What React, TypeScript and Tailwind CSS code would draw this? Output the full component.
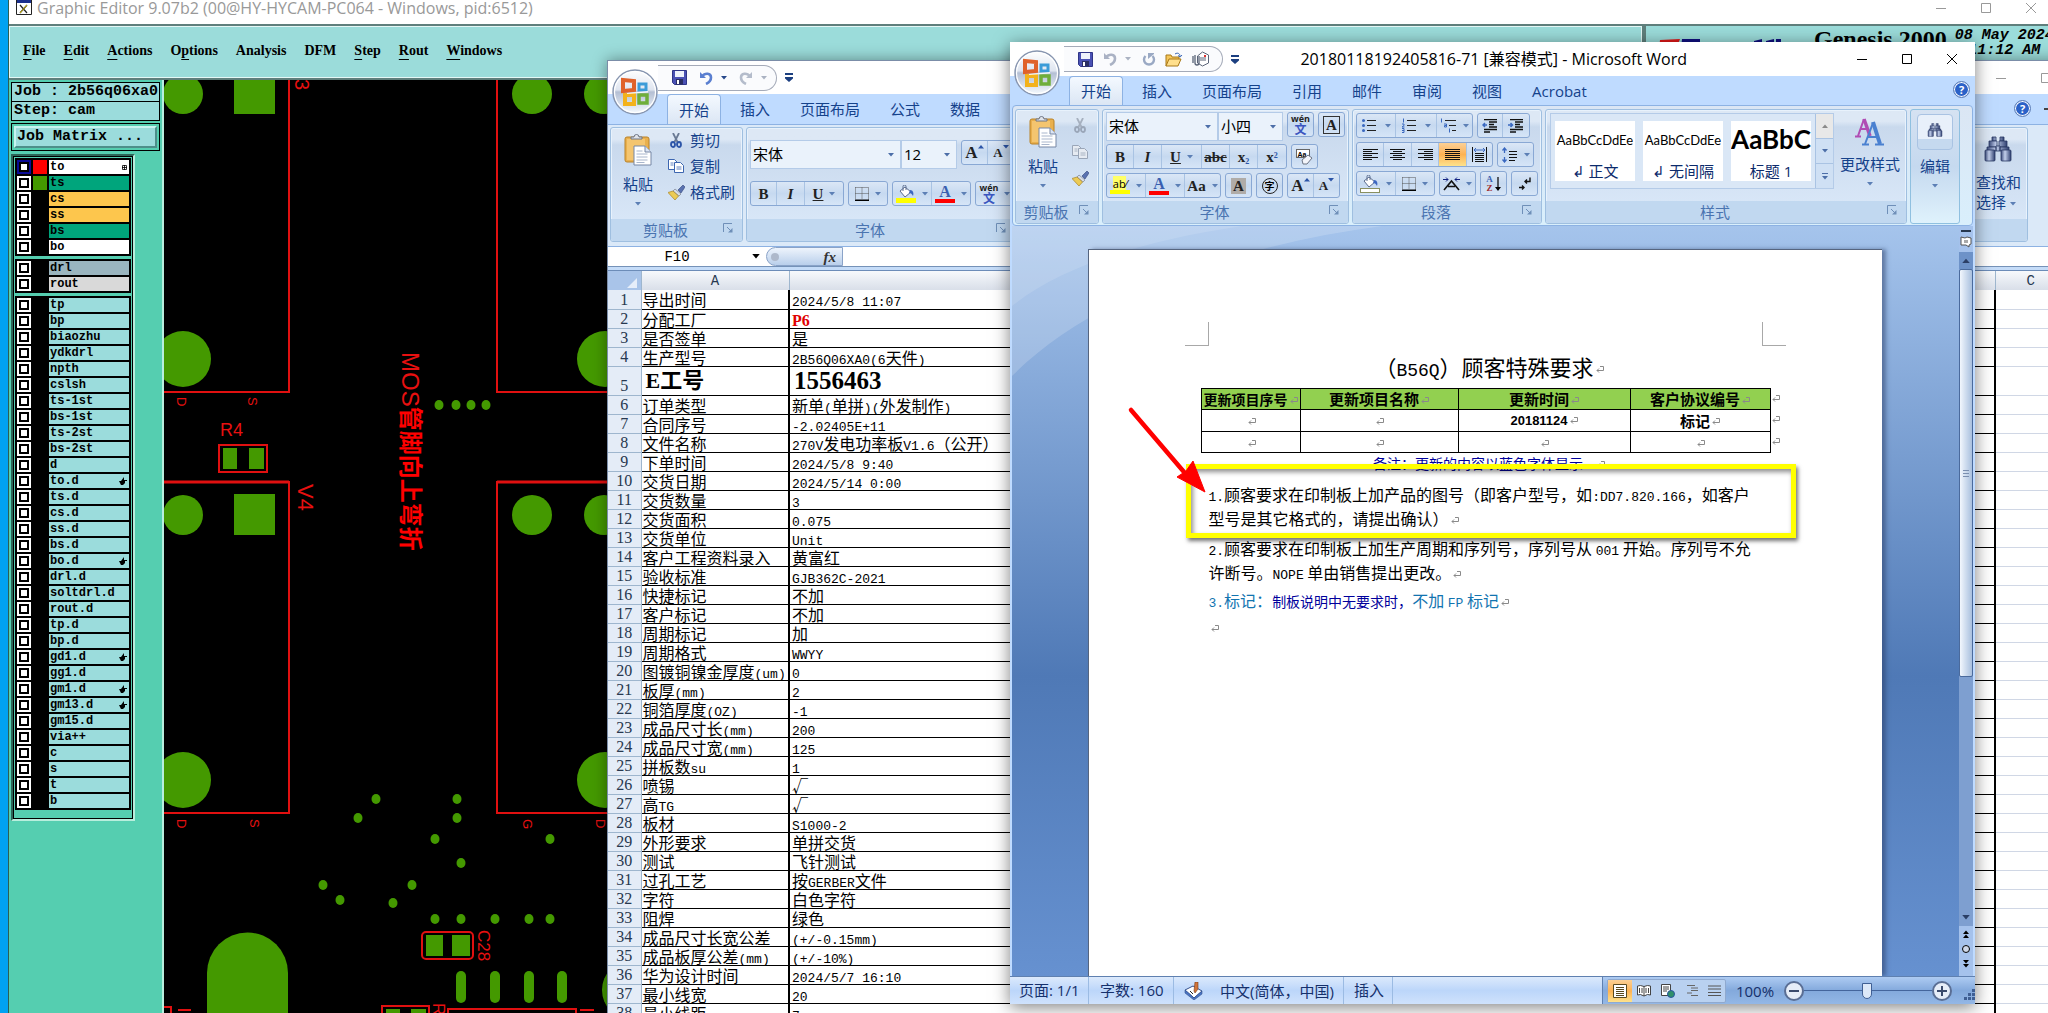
import React from 'react';
import clsx from 'clsx';

const UI = "font-['Open_Sans','Noto_Sans_CJK_SC',sans-serif]";
const MONO = "font-['Liberation_Mono','Noto_Sans_CJK_SC',monospace]";
const SERIF = "font-['Liberation_Serif','Noto_Sans_CJK_SC',serif]";

interface Layer {
    name: string;
    bg?: string;
    swatch?: string;
    mark?: 'grid' | 'hand';
    active?: boolean;
}

const BOARD_LAYERS: Layer[] = [
    { name: 'to', bg: 'bg-white', swatch: 'bg-[#ff0000]', mark: 'grid', active: true },
    { name: 'ts', bg: 'bg-[#00a57c]', swatch: 'bg-[#449900]' },
    { name: 'cs', bg: 'bg-[#fdc64d]' },
    { name: 'ss', bg: 'bg-[#fdc64d]' },
    { name: 'bs', bg: 'bg-[#00a57c]' },
    { name: 'bo', bg: 'bg-white' },
];

const DRILL_LAYERS: Layer[] = [
    { name: 'drl', bg: 'bg-[#9ab5bf]' },
    { name: 'rout', bg: 'bg-[#d9d9d9]' },
];

const HAND = ['to.d', 'bo.d', 'gd1.d', 'gm1.d', 'gm13.d'];
const MISC_LAYERS: Layer[] = [
    'tp', 'bp', 'biaozhu', 'ydkdrl', 'npth', 'cslsh', 'ts-1st', 'bs-1st', 'ts-2st', 'bs-2st', 'd',
    'to.d', 'ts.d', 'cs.d', 'ss.d', 'bs.d', 'bo.d', 'drl.d', 'soltdrl.d', 'rout.d', 'tp.d', 'bp.d',
    'gd1.d', 'gg1.d', 'gm1.d', 'gm13.d', 'gm15.d', 'via++', 'c', 's', 't', 'b',
].map((name) => ({ name, mark: HAND.includes(name) ? 'hand' : undefined }));

const SHEET: [string, string][] = [
    ['导出时间', '2024/5/8 11:07'],
    ['分配工厂', 'P6'],
    ['是否签单', '是'],
    ['生产型号', '2B56Q06XA0(6天件)'],
    ['E工号', '1556463'],
    ['订单类型', '新单(单拼)(外发制作)'],
    ['合同序号', '-2.02405E+11'],
    ['文件名称', '270V发电功率板V1.6（公开）'],
    ['下单时间', '2024/5/8 9:40'],
    ['交货日期', '2024/5/14 0:00'],
    ['交货数量', '3'],
    ['交货面积', '0.075'],
    ['交货单位', 'Unit'],
    ['客户工程资料录入', '黄富红'],
    ['验收标准', 'GJB362C-2021'],
    ['快捷标记', '不加'],
    ['客户标记', '不加'],
    ['周期标记', '加'],
    ['周期格式', 'WWYY'],
    ['图镀铜镍金厚度(um)', '0'],
    ['板厚(mm)', '2'],
    ['铜箔厚度(OZ)', '-1'],
    ['成品尺寸长(mm)', '200'],
    ['成品尺寸宽(mm)', '125'],
    ['拼板数su', '1'],
    ['喷锡', '√'],
    ['高TG', '√'],
    ['板材', 'S1000-2'],
    ['外形要求', '单拼交货'],
    ['测试', '飞针测试'],
    ['过孔工艺', '按GERBER文件'],
    ['字符', '白色字符'],
    ['阻焊', '绿色'],
    ['成品尺寸长宽公差', '(+/-0.15mm)'],
    ['成品板厚公差(mm)', '(+/-10%)'],
    ['华为设计时间', '2024/5/7 16:10'],
    ['最小线宽', '20'],
    ['最小线距', '7'],
];

/* Latin runs are set smaller so that two of them fill one CJK cell */
const Song: React.FC<{ text: string }> = ({ text }) => (
    <>
        {text.split(/([!-~]+(?: [!-~]+)*)/).map((part, i) =>
            i % 2 ? (
                <span key={i} className="font-['Liberation_Mono',monospace] text-[13px] leading-[10px]">{part}</span>
            ) : (
                <React.Fragment key={i}>{part}</React.Fragment>
            ),
        )}
    </>
);

/* ---------- small icons ---------- */

const Down: React.FC<{ className?: string }> = ({ className }) => (
    <svg viewBox="0 0 6 4" className={clsx('h-1 w-1.5 shrink-0', className)}>
        <path d="M0 0h6L3 3.5z" fill="currentColor" />
    </svg>
);

const Launcher = () => (
    <button aria-label="更多选项" className="absolute right-2 top-1">
        <svg viewBox="0 0 11 11" className="size-[11px]" fill="none" stroke="#6f8fb8">
            <path d="M.5 9V.5H9" />
            <path d="M4 4l4 4" />
            <path d="M9.500 5v4.500H5z" fill="#6f8fb8" stroke="none" />
        </svg>
    </button>
);

const OfficeOrb = () => (
    <button aria-label="Office 按钮" className="absolute left-1 top-2 z-10 size-[46px]">
        <svg viewBox="0 0 46 46" className="size-full">
            <defs>
                <linearGradient id="orb" x1="0" y1="0" x2="0" y2="1">
                    <stop offset="0" stopColor="#ffffff" />
                    <stop offset=".45" stopColor="#dfe5f0" />
                    <stop offset=".5" stopColor="#b4bfd4" />
                    <stop offset="1" stopColor="#f6fbff" />
                </linearGradient>
            </defs>
            <circle cx="23" cy="23" r="22" fill="url(#orb)" stroke="#8896b0" strokeWidth="1.400" />
            <circle cx="23" cy="23" r="20.500" fill="none" stroke="#fff" strokeWidth="1.200" />
            <g fill="none">
                <path d="M11 11l11 1v9l-11 1z" stroke="#e0622a" strokeWidth="4" />
                <path d="M27 15h7v6h-7z" stroke="#3b9bd8" strokeWidth="3" />
                <path d="M13 26h9v9h-9z" stroke="#f3b21c" strokeWidth="4" />
                <path d="M27 26h8v8h-8z" stroke="#6fae3a" strokeWidth="3.500" />
            </g>
            <path d="M15 24l21-2v1.500L15 25z" fill="#fff" opacity=".9" />
        </svg>
    </button>
);

const SaveIcon = () => (
    <svg viewBox="0 0 15 15" className="size-[15px] shrink-0">
        <path d="M.5.5h14v14h-12l-2-2z" fill="#4a51b4" stroke="#2f3587" />
        <rect x="3" y="1" width="9" height="6" fill="#eef2fb" />
        <rect x="4" y="9" width="7" height="5.500" fill="#2a2e62" />
        <rect x="5" y="10" width="2" height="4" fill="#fff" />
    </svg>
);

const UndoIcon: React.FC<{ color: string; flip?: boolean }> = ({ color, flip }) => (
    <svg viewBox="0 0 14 14" className={clsx('size-3.5 shrink-0', flip && '-scale-x-100')} fill="none">
        <path d="M1 1v6h6z" fill={color} />
        <path d="M3 5.500C6 1.500 12 2 12 6.500c0 3-2 5-5 6.500" stroke={color} strokeWidth="2.600" />
    </svg>
);

const RepeatIcon = () => (
    <svg viewBox="0 0 14 14" className="size-3.5 shrink-0" fill="none" stroke="#9aa9c4" strokeWidth="2.400">
        <path d="M3.500 4a5 5 0 1 0 7 0" />
        <path d="M6 1h6v1L6 7z" fill="#9aa9c4" stroke="none" />
    </svg>
);

const FolderIcon = () => (
    <svg viewBox="0 0 18 15" className="h-[15px] w-[18px] shrink-0">
        <path d="M1 14V3h5l1 2h7v3" fill="#f5c65a" stroke="#a87818" />
        <path d="M1 14l3-7h12l-3 7z" fill="#ffdf8c" stroke="#a87818" />
        <path d="M10 2c3-2 5 0 5 2M13 3.500l2.200 1.500L17 3" fill="none" stroke="#3a68b8" />
    </svg>
);

const MailIcon = () => (
    <svg viewBox="0 0 17 16" className="h-4 w-[17px] shrink-0" fill="#fff" stroke="#5a6478">
        <path d="M5.500 5l5-4 6 3v8l-6 3-5-3z" />
        <path d="M8 7h6M8 9h6" />
        <path d="M3 4v8a2 2 0 0 0 4 0V5M1 5v7" fill="none" strokeWidth="1.300" />
        <rect x="12" y="4" width="2" height="2" fill="#d33" stroke="none" />
    </svg>
);

const CustomizeIcon = () => (
    <svg viewBox="0 0 9 9" className="size-[9px] shrink-0" fill="#1c3f80">
        <path d="M0 0h8v2H0zM0 4h8v1.500L4 9 0 5.500z" />
    </svg>
);

const PasteIcon = () => (
    <svg viewBox="0 0 28 32" className="h-8 w-7">
        <rect x="1" y="3" width="24" height="25" rx="2" fill="#e9b04e" stroke="#b98228" />
        <rect x="3" y="5" width="18" height="21" fill="#f4c56f" />
        <path d="M7 5h11V3h-3a2.500 2.500 0 0 0-5 0H7z" fill="#dfe3ea" stroke="#6c7484" />
        <path d="M10 12h11l6 6v13H10z" fill="#fff" stroke="#7787a5" />
        <path d="M21 12v6h6" fill="#dbe4f3" stroke="#7787a5" />
        <path d="M12.500 17h6M12.500 20h11M12.500 23h11M12.500 26h11M12.500 28.500h8" stroke="#a9b6cc" />
    </svg>
);

const CutIcon: React.FC<{ off?: boolean }> = ({ off }) => (
    <svg viewBox="0 0 12 15" className="h-[15px] w-3 shrink-0" fill="none" stroke={off ? '#9aa6b8' : '#2c55a8'} strokeWidth="1.800">
        <path d="M3 0l4.500 9M9 0L4.500 9" stroke={off ? '#a6b0bf' : '#6a7a94'} />
        <ellipse cx="3" cy="11.500" rx="2" ry="2.500" />
        <ellipse cx="9" cy="11.500" rx="2" ry="2.500" />
    </svg>
);

const CopyIcon: React.FC<{ off?: boolean }> = ({ off }) => (
    <svg viewBox="0 0 16 14" className="h-3.5 w-4 shrink-0" fill={off ? '#e6ebf2' : '#fff'} stroke={off ? '#9aa6b8' : '#3d66b0'}>
        <path d="M.5.500h6l3 3v7h-9z" />
        <path d="M6.500 3.500h6l3 3v7h-9z" />
        <path d="M2.500 4h3M2.500 6h3M8.500 8h5M8.500 10h5" strokeWidth=".8" />
    </svg>
);

const BrushIcon = () => (
    <svg viewBox="0 0 17 15" className="h-[15px] w-[17px] shrink-0">
        <path d="M10 5l5-5 2 2-4 6z" fill="#5a72b0" stroke="#33457a" strokeWidth=".6" />
        <path d="M7 4l6 5-2 2-6-5z" fill="#d9dde6" stroke="#6c7484" strokeWidth=".6" />
        <path d="M5 6l5.500 5L7 15 0 7.500z" fill="#eccb55" stroke="#a8842a" strokeWidth=".7" />
    </svg>
);

const WenIcon = () => (
    <span className="flex flex-col items-center">
        <span className="text-[9px] font-bold leading-[9px] text-[#222]">wén</span>
        <span className="text-[12px] font-bold leading-[13px] text-[#3b56c0]">文</span>
    </span>
);

const BorderIcon = () => (
    <svg viewBox="0 0 14 14" className="size-3.5" fill="none" stroke="#555">
        <path d="M.5.5h13v12M.5.5v12M7 .5v12M.5 6.500h13" strokeDasharray="1 1" />
        <path d="M0 13.300h14" stroke="#000" strokeWidth="1.400" />
    </svg>
);

const BucketIcon: React.FC<{ bar: string }> = ({ bar }) => (
    <svg viewBox="0 0 20 18" className="h-[18px] w-5">
        <path d="M4 6l5-4 6 5-6 5z" fill="#fff" stroke="#5b6c8e" />
        <path d="M7 6V1.500a1.500 1.500 0 0 1 3 0V5" fill="none" stroke="#5b6c8e" />
        <path d="M14 5c3 0 4 3 3 6-1-2-2-3-4-3z" fill="#3d66c0" />
        <rect x="0.500" y="13.500" width="19" height="4" fill={bar} stroke={bar === '#fff' ? '#8a9060' : bar} />
    </svg>
);

const Letter: React.FC<{ children: React.ReactNode; className?: string }> = ({ children, className }) => (
    <span className={clsx(SERIF, 'text-[15px] font-bold leading-4 text-[#222]', className)}>{children}</span>
);

const FontColor = () => (
    <span className="flex flex-col items-center">
        <span className={clsx(SERIF, 'text-[16px] font-bold leading-[15px] text-[#3a5fb0]')}>A</span>
        <span className="h-1 w-5 bg-[#ff0000]" />
    </span>
);

const Sized: React.FC<{ up?: boolean }> = ({ up }) => (
    <span className="flex items-start">
        <span className={clsx(SERIF, 'font-bold leading-4 text-[#222]', up ? 'text-[17px]' : 'text-[13px]')}>A</span>
        <svg viewBox="0 0 6 4" className="h-1 w-1.5">
            <path d={up ? 'M0 3.500h6L3 0z' : 'M0 0h6L3 3.500z'} fill="#2c55a8" />
        </svg>
    </span>
);

const ALIGN_ROWS = [0, 1, 2, 3, 4, 5];
const AlignIcon: React.FC<{ kind: 'left' | 'center' | 'right' | 'full' }> = ({ kind }) => (
    <svg viewBox="0 0 15 12" className="h-3 w-[15px]" stroke="#111">
        {ALIGN_ROWS.map((r) => {
            const w = kind === 'full' || r % 2 === 0 ? 15 : 9;
            const x = kind === 'center' ? (15 - w) / 2 : kind === 'right' ? 15 - w : 0;
            return <path key={r} d={`M${x} ${r * 2 + 0.5}h${w}`} />;
        })}
    </svg>
);

const ListIcon: React.FC<{ kind: 'dot' | 'num' | 'multi' }> = ({ kind }) => (
    <svg viewBox="0 0 17 15" className="h-[15px] w-[17px]" stroke="#222">
        {kind === 'multi' ? <path d="M5 2.500h11M9 7.500h7M12 12.500h4" /> : <path d="M5 2.500h9M5 7.500h9M5 12.500h9" />}
        {kind === 'dot' && (
            <g fill="#3a68c0" stroke="none">
                <circle cx="1.500" cy="2.500" r="1.500" />
                <circle cx="1.500" cy="7.500" r="1.500" />
                <circle cx="1.500" cy="12.500" r="1.500" />
            </g>
        )}
        {kind === 'num' && <path d="M1.500.500v4M0 6h2v1.500L0 9h2.500M0 10.500h2v4H0M0 12.500h2" stroke="#3a68c0" fill="none" />}
        {kind === 'multi' && <path d="M1.500.500v4M4 6h2.500v3H4.500v-1.500h2M9.500 10.500v4" stroke="#3a68c0" fill="none" />}
    </svg>
);

const IndentIcon: React.FC<{ flip?: boolean }> = ({ flip }) => (
    <svg viewBox="0 0 16 14" className="h-3.5 w-4" stroke="#111" fill="none">
        <path d="M2 .5h13M7 3h8M7 5.500h5M7 8h8M2 10.500h13M2 13h6" strokeWidth="1.300" />
        <path d={flip ? 'M0 6h4M2.500 4l2 2-2 2' : 'M1 6h4M3 4L1 6l2 2'} stroke="#3a68c0" strokeWidth="1.500" />
    </svg>
);

const Binoculars: React.FC<{ className: string }> = ({ className }) => (
    <svg viewBox="0 0 28 26" className={className}>
        <defs>
            <linearGradient id="bino">
                <stop offset="0" stopColor="#3c4c7c" />
                <stop offset=".4" stopColor="#c3d0ec" />
                <stop offset="1" stopColor="#2f3f70" />
            </linearGradient>
        </defs>
        <g fill="url(#bino)" stroke="#2a3763" strokeWidth=".8">
            <path d="M8 1h4v4H8zM16 1h4v4h-4z" />
            <path d="M5 5h8v6H5zM15 5h8v6h-8z" />
            <path d="M3 11h9v4H3zM16 11h9v4h-9zM12 10h4v5h-4z" />
            <rect x="1" y="14" width="10" height="11" rx="1" />
            <rect x="17" y="14" width="10" height="11" rx="1" />
        </g>
    </svg>
);

const HelpIcon = () => (
    <button aria-label="帮助" className="flex size-[15px] items-center justify-center rounded-full bg-[#2b62c8] text-[11px] font-bold leading-none text-white outline outline-1 outline-[#5c7db5] ring-1 ring-inset ring-white">
        ?
    </button>
);

const Caption: React.FC<{ color: string; className?: string }> = ({ color, className }) => (
    <div className={clsx('flex shrink-0 items-center', className)} style={{ color }}>
        <button aria-label="最小化" className="flex w-[45px] justify-center">
            <svg viewBox="0 0 10 10" className="size-2.5" stroke="currentColor"><path d="M0 5.500h10" /></svg>
        </button>
        <button aria-label="最大化" className="flex w-[45px] justify-center">
            <svg viewBox="0 0 10 10" className="size-2.5" stroke="currentColor" fill="none"><path d="M.5.500h9v9h-9z" /></svg>
        </button>
        <button aria-label="关闭" className="flex w-[46px] justify-center">
            <svg viewBox="0 0 10 10" className="size-2.5" stroke="currentColor"><path d="M0 0l10 10M10 0L0 10" /></svg>
        </button>
    </div>
);

/* ---------- ribbon parts ---------- */

const Group: React.FC<{ label?: string; className?: string; launcher?: boolean; children: React.ReactNode }> = ({
    label, className, launcher, children,
}) => (
    <section className={clsx('flex shrink-0 flex-col overflow-hidden rounded-[3px] border border-[#9fbfe0] bg-linear-to-b from-[#dde8f5] from-10% via-[#c9d9ed] via-15% to-[#dceafa] shadow-[inset_0_0_0_1px_#e8f2fc]', className)}>
        <div className="flex-1">{children}</div>
        <div className={clsx('relative h-[22px] bg-[#c1d8f0] text-center text-[15px] leading-[22px] text-[#4a74b0]', launcher && 'pr-[22px]')}>
            {label}
            {launcher && <Launcher />}
        </div>
    </section>
);

const Seg: React.FC<{ children: React.ReactNode }> = ({ children }) => (
    <div className="flex h-[25px] divide-x divide-[#a9c3e3] overflow-hidden rounded-[3px] border border-[#89a8d4] bg-linear-to-b from-[#dbe7f6] via-[#c6d9f0] to-[#d6e5f7]">
        {children}
    </div>
);

const Tool: React.FC<{ w: string; label: string; down?: boolean; on?: boolean; children: React.ReactNode }> = ({
    w, label, down, on, children,
}) => (
    <button aria-label={label} className={clsx('flex items-center justify-center gap-1.5', w, on && 'bg-linear-to-b from-[#fbd095] via-[#fdb252] to-[#fde28c]')}>
        {children}
        {down && <Down className="text-[#5c7fb5]" />}
    </button>
);

const Pick: React.FC<{ label: string; value: string; w: string }> = ({ label, value, w }) => (
    <label className={clsx('relative flex items-center border border-[#b4cbe8] bg-[#eaf2fb]', w)}>
        <select aria-label={label} className="h-full w-full appearance-none pl-0.5 text-[15px] text-black">
            <option>{value}</option>
        </select>
        <Down className="pointer-events-none absolute right-1.5 text-[#4c6ea8]" />
    </label>
);

const Tabs: React.FC<{ items: string[] }> = ({ items }) => (
    <nav className="flex h-full items-stretch pl-[59px] text-[15px] leading-7 text-[#15428b]">
        {items.map((t, i) => (
            <button
                key={t}
                className={clsx(
                    'mr-2 shrink-0 whitespace-nowrap px-[11px]',
                    i === 0 && 'rounded-t-[4px] border border-b-0 border-[#8db2e3] bg-linear-to-b from-[#f4f9ff] to-[#dbe6f4]',
                )}
            >
                {t}
            </button>
        ))}
    </nav>
);

const QAT = 'flex h-[26px] items-center rounded-r-full border border-l-0 border-[#a4aab8] bg-[#fafbfd] pl-3.5';

/* ---------- Genesis window ---------- */

const LayerRow: React.FC<{ layer: Layer }> = ({ layer }) => (
    <label className="flex h-4 items-stretch">
        <span className={clsx('my-px flex w-[14px] items-center justify-center', layer.active ? 'bg-[#0a0a96]' : 'bg-white')}>
            <input type="checkbox" aria-label={layer.name} className="size-2.5 appearance-none border-2 border-black bg-white" />
        </span>
        <span className={clsx('mx-0.5 my-px w-3.5', layer.swatch)} />
        <span className={clsx('my-px flex flex-1 items-center justify-between pl-px pr-0.5 text-xs font-bold leading-[14px]', layer.bg ?? 'bg-[#9bdcdc]')}>
            {layer.name}
            {layer.mark === 'grid' && (
                <svg viewBox="0 0 5 5" className="size-[5px]" stroke="#000" fill="none"><path d="M.5.5h4v4h-4zM2.500 0v5M0 2.500h5" strokeWidth=".8" /></svg>
            )}
            {layer.mark === 'hand' && (
                <svg viewBox="0 0 8 8" className="size-2"><path d="M0 4h2l3-4v3h3v1H6v2L4 8H2L1 6z" /></svg>
            )}
        </span>
    </label>
);

const LayerGroup: React.FC<{ layers: Layer[] }> = ({ layers }) => (
    <div className="border border-black bg-black px-px">
        {layers.map((l) => <LayerRow key={l.name} layer={l} />)}
    </div>
);

const DOTS = [
    [439, 405], [456, 405], [471, 405], [486, 405], [376, 799], [457, 799], [358, 818], [457, 818], [435, 839], [550, 839],
    [461, 863], [323, 885], [412, 885], [340, 900], [393, 903], [435, 919], [461, 919], [495, 919], [529, 919], [550, 919],
];

const MENU: [string, string, string][] = [
    ['', 'F', 'ile'], ['', 'E', 'dit'], ['', 'A', 'ctions'], ['O', 'p', 'tions'], ['Analysis', '', ''],
    ['DFM', '', ''], ['', 'S', 'tep'], ['', 'R', 'out'], ['', 'W', 'indows'],
];

const Board = () => (
    <svg viewBox="164 80 1890 933" preserveAspectRatio="xMinYMin slice" className="size-full bg-black font-['Liberation_Sans','Noto_Sans_CJK_SC',sans-serif]">
        <g fill="#449900">
            <circle cx="183" cy="94" r="20" />
            <rect x="234" y="74" width="41" height="40" />
            <circle cx="532" cy="94" r="20" />
            <circle cx="604" cy="94" r="20" />
            <circle cx="183" cy="359" r="28" />
            <circle cx="605" cy="359" r="28" />
            <rect x="223" y="448" width="14" height="21" />
            <rect x="249" y="448" width="15" height="21" />
            <circle cx="183" cy="515" r="20" />
            <rect x="234" y="494" width="41" height="41" />
            <circle cx="532" cy="515" r="20" />
            <circle cx="604" cy="515" r="20" />
            <circle cx="183" cy="780" r="28" />
            <circle cx="605" cy="780" r="28" />
            {DOTS.map(([x, y]) => <ellipse key={`${x}-${y}`} cx={x} cy={y} rx="4.500" ry="5" />)}
            <path d="M207 1020V973a40 40 0 0 1 81 0v47z" />
            <rect x="426" y="935" width="17" height="21" />
            <rect x="452" y="935" width="18" height="21" />
            {[461, 495, 529, 562].map((x) => <rect key={x} x={x - 5} y="971" width="10" height="32" rx="5" />)}
            <rect x="386" y="1009" width="14" height="8" />
            <rect x="411" y="1009" width="15" height="8" />
            <circle cx="632" cy="990" r="30" />
        </g>
        <g fill="none" stroke="#e01010" strokeWidth="2">
            <path d="M289 80v312H164M640 392H497V80" />
            <path d="M164 482h125v331H164M640 482H497v331h143" />
            <path d="M164 482h125M497 482h143" strokeWidth="3" />
            <rect x="219" y="445" width="48" height="27" />
            <rect x="422" y="932" width="51" height="27" rx="4" />
            <path d="M382 1020v-14h47v14M448 1020v-11h128v11M164 1007h7v13M178 1010h13M580 1010h14" />
        </g>
        <g fill="#e81010">
            <text x="220" y="436" fontSize="18">R4</text>
            <text transform="translate(295 79) rotate(90)" fontSize="20">3</text>
            <text transform="translate(298 484) rotate(90)" fontSize="22">V4</text>
            <text transform="translate(177 397) rotate(90)" fontSize="13">D</text>
            <text transform="translate(248 397) rotate(90)" fontSize="13">S</text>
            <text transform="translate(177 819) rotate(90)" fontSize="13">D</text>
            <text transform="translate(250 819) rotate(90)" fontSize="13">S</text>
            <text transform="translate(523 819) rotate(90)" fontSize="13">G</text>
            <text transform="translate(596 819) rotate(90)" fontSize="13">D</text>
            <text transform="translate(478 930) rotate(90)" fontSize="17">C28</text>
            <text transform="translate(433 1003) rotate(90)" fontSize="17">R</text>
            <text transform="translate(402 352) rotate(90)" fontSize="24">MOS<tspan fontWeight="700" fill="#ff0000">管脚向上弯折</tspan></text>
        </g>
    </svg>
);

const GenesisWindow = () => (
    <div className="absolute inset-y-0 left-2 right-[-6px] flex flex-col border-l border-[#2c5f55] bg-[#55ceb0]">
        <header className="flex h-6 shrink-0 items-start justify-between bg-white">
            <div className="flex items-center gap-[5px] pl-[7px]">
                <svg viewBox="0 0 16 16" className="size-4">
                    <path d="M.5-3h15v17.500H.5z" fill="#fff" stroke="#222" />
                    <path d="M1 0h14v3H1z" fill="#1b2f8c" />
                    <path d="M4 5l7 8M11 5l-7 8" stroke="#222" strokeWidth="1.200" />
                    <path d="M4 13l7-8" stroke="#d4b800" />
                </svg>
                <h1 className="text-base leading-4 text-[#999]">Graphic Editor 9.07b2 (00@HY-HYCAM-PC064 - Windows, pid:6512)</h1>
            </div>
            <Caption color="#999" className="h-[15px]" />
        </header>
        <div className={clsx('flex h-14 shrink-0 border-y-2 border-[#5f7f7c] bg-[#9bdcda]', SERIF)}>
            <nav className="flex flex-1 items-center gap-[18px] border border-[#e4f8f6] pb-0.5 pl-[13px] text-[14px] font-bold text-black">
                {MENU.map(([pre, key, post]) => (
                    <button key={pre + key + post} className="leading-5">
                        {pre}<span className="underline underline-offset-4">{key}</span>{post}
                    </button>
                ))}
            </nav>
            <div className="flex w-[412px] items-start border-l-4 border-[#5f7f7c] pl-2">
                <svg viewBox="0 0 140 30" className="mt-3 h-[30px] w-[140px]">
                    <path d="M6 2l20-1-8 20H4z" fill="#e01818" />
                    <path d="M28 1h18v6H34v14h-8zM100 3l8-2v20h-8zM112 3l8-2v20h-8zM122 1h5v20h-5z" fill="#101080" />
                </svg>
                <span className="ml-5 whitespace-nowrap text-[24px] font-bold leading-[26px]">Genesis 2000</span>
                <span className={clsx('ml-2 mt-0.5 whitespace-pre text-center text-[15px] font-bold italic leading-[15px]', MONO)}>{'08 May 2024\n11:12 AM'}</span>
            </div>
        </div>
        <div className="flex min-h-0 flex-1">
            <aside className={clsx('w-[155px] shrink-0 border-r-2 border-[#b8eedd] pl-0.5 pt-0.5 text-black', MONO)}>
                <div className="mr-0.5 border border-black bg-[#9bdcdc] text-[15px] font-bold">
                    <p className="border-b border-black pl-0.5 leading-[18px]">Job : 2b56q06xa0</p>
                    <p className="pl-0.5 leading-[18px]">Step: cam</p>
                </div>
                <div className="mr-0.5 mt-0.5 border border-black p-0.5">
                    <button className="block w-full border-2 border-b-[#4d8f8a] border-l-[#c8f4f0] border-r-[#4d8f8a] border-t-[#c8f4f0] bg-[#9bdcdc] pl-px text-left text-[15px] font-bold leading-[18px]">
                        Job Matrix ...
                    </button>
                </div>
                <div className="mt-[3px] w-[124px] border-2 border-b-[#b8eedd] border-l-[#2c6658] border-r-[#b8eedd] border-t-[#2c6658]">
                    <div className="flex flex-col gap-[3px] border border-black p-px pb-2">
                        <LayerGroup layers={BOARD_LAYERS} />
                        <LayerGroup layers={DRILL_LAYERS} />
                        <LayerGroup layers={MISC_LAYERS} />
                    </div>
                </div>
            </aside>
            <div className="min-w-0 flex-1"><Board /></div>
        </div>
    </div>
);

/* ---------- Excel window ---------- */

const ExcelWindow = () => (
    <div className="absolute bottom-0 left-[607px] right-[-66px] top-[60px] flex flex-col overflow-hidden border-l border-t border-[#7b8da8] bg-white shadow-[0_0_14px_rgba(0,0,0,0.4)]">
        <OfficeOrb />
        <header className="flex h-[33px] shrink-0 items-center justify-between">
            <div className="flex items-center pl-[50px]">
                <div className={clsx(QAT, 'w-[119px]')}>
                    <SaveIcon />
                    <span className="ml-3 flex items-center gap-2"><UndoIcon color="#5a7fd0" /><Down className="text-[#27488a]" /></span>
                    <span className="ml-3 flex items-center gap-2"><UndoIcon color="#b4bccb" flip /><Down className="text-[#aab2c2]" /></span>
                </div>
                <span className="ml-2"><CustomizeIcon /></span>
            </div>
            <Caption color="#999" className="h-[30px]" />
        </header>
        <div className="relative h-[30px] shrink-0 bg-[#bfdbff]">
            <Tabs items={['开始', '插入', '页面布局', '公式', '数据']} />
            <div className="absolute right-[58px] top-[7px] flex items-center gap-3.5"><HelpIcon /><span className="h-0.5 w-3 bg-[#444]" /></div>
        </div>
        <div className="flex h-[123px] shrink-0 justify-between border-y border-[#8db2e3] bg-[#dbe9f8] px-0.5 pb-1 pt-0.5">
            <div className="flex gap-[3px]">
                <Group label="剪贴板" launcher className="w-[133px]">
                    <div className="flex pt-0.5 text-[15px] leading-5 text-[#15428b]">
                        <button className="flex w-[54px] flex-col items-center gap-2 pt-1">
                            <PasteIcon /><span>粘贴</span><Down className="text-[#5c7fb5]" />
                        </button>
                        <div className="flex flex-col gap-1.5 pl-[3px]">
                            <button className="flex items-center gap-1.5"><span className="flex w-4 justify-center"><CutIcon /></span>剪切</button>
                            <button className="flex items-center gap-1.5"><CopyIcon />复制</button>
                            <button className="flex items-center gap-[5px]"><BrushIcon />格式刷</button>
                        </div>
                    </div>
                </Group>
                <Group label="字体" launcher className="w-[270px]">
                    <div className="flex flex-col gap-3 pl-[3px] pt-3">
                        <div className="flex gap-1">
                            <div className="flex h-[29px]">
                                <Pick label="字体" value="宋体" w="w-[151px]" />
                                <Pick label="字号" value="12" w="w-[56px]" />
                            </div>
                            <Seg>
                                <Tool w="w-[26px]" label="增大字号"><Sized up /></Tool>
                                <Tool w="w-[26px]" label="减小字号"><Sized /></Tool>
                            </Seg>
                        </div>
                        <div className="flex gap-1">
                            <Seg>
                                <Tool w="w-[26px]" label="加粗"><Letter>B</Letter></Tool>
                                <Tool w="w-[28px]" label="倾斜"><Letter className="italic">I</Letter></Tool>
                                <Tool w="w-[38px]" label="下划线" down><Letter className="underline">U</Letter></Tool>
                            </Seg>
                            <Seg><Tool w="w-[38px]" label="边框" down><BorderIcon /></Tool></Seg>
                            <Seg>
                                <Tool w="w-[39px]" label="填充颜色" down><BucketIcon bar="#ffff00" /></Tool>
                                <Tool w="w-[38px]" label="字体颜色" down><FontColor /></Tool>
                            </Seg>
                            <Seg><Tool w="w-[38px]" label="拼音" down><WenIcon /></Tool></Seg>
                        </div>
                    </div>
                </Group>
            </div>
            <Group className="mr-[84px] w-[66px]">
                <button className="flex flex-col items-start gap-1.5 pl-[13px] pt-2 text-[15px] leading-5 text-[#15428b]">
                    <span className="pl-2"><Binoculars className="h-[26px] w-7" /></span>
                    <span className="mt-1 whitespace-nowrap text-left">查找和<br />选择<Down className="ml-1 inline-block text-[#5c7fb5]" /></span>
                </button>
            </Group>
        </div>
        <div className="flex h-5 shrink-0 border-b border-[#7592b8] bg-white text-black">
            <label className="relative flex w-[158px] items-center">
                <input aria-label="名称框" defaultValue="F10" className={clsx('w-[138px] bg-transparent pt-0.5 text-center text-[14px]', MONO)} />
                <Down className="absolute right-1.5 h-[5px] w-2" />
            </label>
            <div className="flex w-[77px] items-center justify-between rounded-l-full border border-[#8aa3c8] bg-linear-to-b from-[#eef4fc] to-[#b9cfeb] pl-1 pr-1.5">
                <span className="size-2 rounded-full bg-[#aeb9cb]" />
                <span className={clsx(SERIF, 'text-[15px] font-bold italic leading-4 text-[#333]')}>fx</span>
            </div>
            <input aria-label="编辑栏" className="flex-1" />
        </div>
        <div className="h-1 shrink-0 border-b border-[#6c8cb8] bg-[#c5dcf8]" />
        <table className="w-full shrink-0 table-fixed border-collapse text-left text-black font-['Noto_Sans_CJK_SC',sans-serif] text-base">
            <colgroup>
                <col className="w-[33px]" />
                <col className="w-[148px]" />
                <col />
                <col className="w-[119px]" />
            </colgroup>
            <thead>
                <tr className={clsx('h-[19px] bg-linear-to-b from-[#f7f9fc] to-[#d9dfe9] text-center text-[14px] text-[#27384f]', MONO)}>
                    <th className="bg-[#a9c4e9] p-0">
                        <svg viewBox="0 0 11 11" className="ml-auto mr-1 mt-1 size-2.5"><path d="M11 0v11H0z" fill="#e6eefa" /></svg>
                    </th>
                    <th className="border-x border-[#9eb6ce] p-0 pt-px font-normal leading-[18px]">A</th>
                    <th className="border-r border-[#9eb6ce] p-0 pt-px font-normal leading-[18px]">B</th>
                    <th className="p-0 pr-12 pt-px font-normal leading-[18px]">C</th>
                </tr>
            </thead>
            <tbody>
                {SHEET.map(([key, value], i) => (
                    <tr key={key} className={i === 4 ? 'h-[29px]' : 'h-[19px]'}>
                        <th className={clsx('border-b border-r border-[#9eb6ce] bg-[#e4ecf7] p-0 text-center align-bottom font-normal leading-[18px] text-[#27384f]', SERIF)}>{i + 1}</th>
                        {i === 4 ? (
                            <>
                                <td className={clsx('whitespace-nowrap border-b border-r-2 border-black p-0 pl-1 text-[22px] font-bold leading-7', SERIF)}>{key}</td>
                                <td className={clsx('whitespace-nowrap border-b border-r-2 border-black p-0 pl-1 text-[25px] font-bold leading-7', SERIF)}>{value}</td>
                            </>
                        ) : (
                            <>
                                <td className="whitespace-nowrap border-b border-r-2 border-black p-0 pl-px leading-[18px]"><Song text={key} /></td>
                                <td className="whitespace-nowrap border-b border-r-2 border-black p-0 pl-0.5 leading-[18px]">
                                    {i === 1 ? <b className={clsx('leading-[10px] text-[#e00000]', SERIF)}>{value}</b> : <Song text={value} />}
                                </td>
                            </>
                        )}
                        <td className="border-b border-[#d0d7e5] p-0" />
                    </tr>
                ))}
            </tbody>
        </table>
    </div>
);

/* ---------- Word window ---------- */

const STYLES = [
    { sample: 'AaBbCcDdEe', name: '↲ 正文' },
    { sample: 'AaBbCcDdEe', name: '↲ 无间隔' },
    { sample: 'AaBbC', name: '标题 1', big: true },
];

const WordRibbon = () => (
    <div className="mx-0.5 flex h-[121px] shrink-0 gap-[3px] rounded-[4px] border border-[#8db2e3] bg-linear-to-b from-[#dbe6f4] to-[#d9effc] px-0.5 pb-px pt-[3px]">
        <Group label="剪贴板" launcher className="w-[84px]">
            <div className="flex pt-0.5 text-[15px] leading-5 text-[#15428b]">
                <button className="flex w-[54px] flex-col items-center gap-2 pt-1">
                    <PasteIcon /><span>粘贴</span><Down className="text-[#5c7fb5]" />
                </button>
                <div className="flex w-5 flex-col items-center gap-3 pt-1.5">
                    <button aria-label="剪切" className="block"><CutIcon off /></button>
                    <button aria-label="复制" className="block"><CopyIcon off /></button>
                    <button aria-label="格式刷" className="block"><BrushIcon /></button>
                </div>
            </div>
        </Group>
        <Group label="字体" launcher className="w-[247px]">
            <div className="flex flex-col gap-[3px] pl-[3px] pt-0.5">
                <div className="flex gap-1">
                    <div className="flex h-[29px]">
                        <Pick label="字体" value="宋体" w="w-[112px]" />
                        <Pick label="字号" value="小四" w="w-[65px]" />
                    </div>
                    <Seg><Tool w="w-[25px]" label="拼音"><WenIcon /></Tool></Seg>
                    <Seg><Tool w="w-[25px]" label="字符边框"><Letter className="border border-[#333] px-0.5">A</Letter></Tool></Seg>
                </div>
                <div className="flex gap-1">
                    <Seg>
                        <Tool w="w-[27px]" label="加粗"><Letter>B</Letter></Tool>
                        <Tool w="w-[28px]" label="倾斜"><Letter className="italic">I</Letter></Tool>
                        <Tool w="w-[40px]" label="下划线" down><Letter className="underline">U</Letter></Tool>
                        <Tool w="w-[28px]" label="删除线"><Letter className="line-through">abc</Letter></Tool>
                        <Tool w="w-[28px]" label="下标"><Letter>x<sub className="text-[8px] text-[#2c55a8]">2</sub></Letter></Tool>
                        <Tool w="w-[28px]" label="上标"><Letter>x<sup className="text-[8px] text-[#2c55a8]">2</sup></Letter></Tool>
                    </Seg>
                    <Seg>
                        <Tool w="w-[25px]" label="清除格式">
                            <svg viewBox="0 0 17 17" className="size-[17px]">
                                <rect x=".5" y="1.500" width="13" height="8" fill="#fff" stroke="#666" />
                                <text x="1.500" y="8.500" fontSize="7" fontWeight="bold" fontFamily="Liberation Sans">Aa</text>
                                <path d="M6 12l6-5 4 3-5 6H7z" fill="#f3f5fa" stroke="#6c7484" />
                            </svg>
                        </Tool>
                    </Seg>
                </div>
                <div className="flex gap-1 pt-px">
                    <Seg>
                        <Tool w="w-[39px]" label="突出显示" down>
                            <span className="flex flex-col items-center">
                                <span className="text-[11px] leading-[13px] text-black"><span className="bg-[#ffff66]">ab</span>⁄</span>
                                <span className="h-1 w-5 bg-[#ffff00]" />
                            </span>
                        </Tool>
                        <Tool w="w-[39px]" label="字体颜色" down><FontColor /></Tool>
                        <Tool w="w-[35px]" label="更改大小写" down><Letter>Aa</Letter></Tool>
                    </Seg>
                    <Seg><Tool w="w-[25px]" label="字符底纹"><Letter className="bg-[#b0aca8] px-0.5">A</Letter></Tool></Seg>
                    <Seg>
                        <Tool w="w-[25px]" label="带圈字符">
                            <span className="flex size-4 items-center justify-center rounded-full border border-[#222] text-[10px] font-bold leading-none text-black">字</span>
                        </Tool>
                    </Seg>
                    <Seg>
                        <Tool w="w-[26px]" label="增大字号"><Sized up /></Tool>
                        <Tool w="w-[25px]" label="减小字号"><Sized /></Tool>
                    </Seg>
                </div>
            </div>
        </Group>
        <Group label="段落" launcher className="w-[190px]">
            <div className="flex flex-col gap-1 pl-[3px] pt-[3px]">
                <div className="flex gap-1">
                    <Seg>
                        <Tool w="w-[39px]" label="项目符号" down><ListIcon kind="dot" /></Tool>
                        <Tool w="w-[41px]" label="编号" down><ListIcon kind="num" /></Tool>
                        <Tool w="w-[35px]" label="多级列表" down><ListIcon kind="multi" /></Tool>
                    </Seg>
                    <Seg>
                        <Tool w="w-[25px]" label="减少缩进量"><IndentIcon /></Tool>
                        <Tool w="w-[26px]" label="增加缩进量"><IndentIcon flip /></Tool>
                    </Seg>
                </div>
                <div className="flex gap-1">
                    <Seg>
                        <Tool w="w-[27px]" label="左对齐"><AlignIcon kind="left" /></Tool>
                        <Tool w="w-[28px]" label="居中"><AlignIcon kind="center" /></Tool>
                        <Tool w="w-[27px]" label="右对齐"><AlignIcon kind="right" /></Tool>
                        <Tool w="w-[28px]" label="两端对齐" on><AlignIcon kind="full" /></Tool>
                        <Tool w="w-[25px]" label="分散对齐">
                            <svg viewBox="0 0 15 16" className="h-4 w-[15px]" stroke="#111" fill="none">
                                <path d="M.5 0v15M14.500 0v15M3 6.500h9M3 8.500h9M3 10.500h9M3 12.500h9M3 14.500h9" />
                                <path d="M2 3h11M4 1L2 3l2 2M11 1l2 2-2 2" stroke="#3a68c0" />
                            </svg>
                        </Tool>
                    </Seg>
                    <Seg>
                        <Tool w="w-[35px]" label="行距" down>
                            <svg viewBox="0 0 16 16" className="size-4" stroke="#111" fill="none">
                                <path d="M7 4.500h8M7 7.500h8M7 10.500h8M7 13.500h6" />
                                <path d="M2.500 1v5M2.500 10v5M.5 3.500l2-2.500 2 2.500M.5 12.500l2 2.500 2-2.500" stroke="#3a68c0" strokeWidth="1.300" />
                            </svg>
                        </Tool>
                    </Seg>
                </div>
                <div className="flex gap-1">
                    <Seg>
                        <Tool w="w-[39px]" label="底纹" down><BucketIcon bar="#fff" /></Tool>
                        <Tool w="w-[38px]" label="边框" down><BorderIcon /></Tool>
                    </Seg>
                    <Seg>
                        <Tool w="w-[35px]" label="中文版式" down>
                            <svg viewBox="0 0 17 14" className="h-3.5 w-[17px]" stroke="#111" fill="none">
                                <path d="M1 13l7.500-9 7.500 9M5 9.500h7" strokeWidth="1.600" />
                                <path d="M0 2.500h5M3 .5l2 2-2 2M17 2.500h-5M14 .5l-2 2 2 2" stroke="#102080" />
                            </svg>
                        </Tool>
                    </Seg>
                    <Seg>
                        <Tool w="w-[25px]" label="排序">
                            <span className="flex items-center gap-0.5">
                                <span className={clsx(SERIF, 'text-[9px] font-bold leading-[9px]')}><span className="block text-[#3a5fb0]">A</span><span className="block text-[#a02c2c]">Z</span></span>
                                <svg viewBox="0 0 6 14" className="h-3.5 w-1.5"><path d="M3 0v11" stroke="#111" strokeWidth="1.300" /><path d="M0 10h6l-3 4z" /></svg>
                            </span>
                        </Tool>
                    </Seg>
                    <Seg>
                        <Tool w="w-[25px]" label="显示编辑标记">
                            <svg viewBox="0 0 12 13" className="h-3.5 w-3" stroke="#111" fill="none" strokeWidth="1.400"><path d="M11 0v4H6M8 2L6 4l2 2M0 10h5M3 8l2 2-2 2" /></svg>
                        </Tool>
                    </Seg>
                </div>
            </div>
        </Group>
        <Group label="样式" launcher className="min-w-[362px] flex-1">
            <div className="flex pl-1 pt-[3px]">
                <div className="flex h-[76px] border border-[#b4cbe8] bg-[#dae7f6]">
                    <div className="flex gap-2 p-1 pt-[7px]">
                        {STYLES.map((s) => (
                            <button key={s.name} className="flex h-[60px] w-20 flex-col items-center justify-between overflow-hidden bg-white">
                                <span className={clsx('flex h-9 items-center', s.big ? 'text-[26px] font-bold font-[Lato,sans-serif]' : 'pt-1 text-[13px] font-[Lato,sans-serif]')}>{s.sample}</span>
                                <span className="text-[15px] leading-5 text-[#0b2a6b]">{s.name}</span>
                            </button>
                        ))}
                    </div>
                    <div className="flex w-[18px] flex-col divide-y divide-[#a9c3e3] border-l border-[#a9c3e3] bg-[#cfe0f4]">
                        <button aria-label="上一行" className="flex flex-1 items-center justify-center bg-[#e8e8e8]"><Down className="rotate-180 text-[#8a8a8a]" /></button>
                        <button aria-label="下一行" className="flex flex-1 items-center justify-center"><Down className="text-[#4c6ea8]" /></button>
                        <button aria-label="其他" className="flex flex-1 flex-col items-center justify-center gap-0.5 text-[#4c6ea8]"><span className="h-px w-1.5 bg-current" /><Down /></button>
                    </div>
                </div>
                <button className="flex flex-1 flex-col items-center text-[15px] leading-5 text-[#15428b]">
                    <svg viewBox="0 0 30 29" className="mt-1 h-[29px] w-[30px]" fill="none">
                        <path d="M3 19L9 2" stroke="#b04cb4" strokeWidth="2" />
                        <path d="M9 2l6 17" stroke="#b04cb4" strokeWidth="3.500" />
                        <path d="M6 12h7M0 19.500h6" stroke="#b04cb4" strokeWidth="2" />
                        <path d="M10 27l8-21" stroke="#4a80d0" strokeWidth="2" />
                        <path d="M18 5l7 22" stroke="#4a80d0" strokeWidth="4" />
                        <path d="M13 20h9M7 27.500h7M20 27.500h9" stroke="#4a80d0" strokeWidth="2" />
                    </svg>
                    <span className="mt-2">更改样式</span>
                    <Down className="mt-2 text-[#5c7fb5]" />
                </button>
            </div>
        </Group>
        <div className="mr-2.5 flex w-[50px] shrink-0 flex-col items-center rounded-[3px] border border-[#8fc0e0] bg-linear-to-b from-[#d5e2f2] via-[#c5d9ef] to-[#dff2fc] text-[15px] leading-5 text-[#15428b]">
            <span className="mt-1 flex h-9 w-9 items-start justify-center rounded-[4px] border border-[#a9c3e3] bg-linear-to-b from-[#e8f0fa] from-70% to-[#c5d9ef] to-70% pt-2">
                <Binoculars className="h-3.5 w-4" />
            </span>
            <button className="mt-1.5 flex flex-col items-center gap-2">编辑<Down className="text-[#5c7fb5]" /></button>
        </div>
    </div>
);

const Ret: React.FC<{ className?: string }> = ({ className }) => (
    <svg viewBox="0 0 8 8" className={clsx('ml-0.5 inline-block size-2', className)} fill="none" stroke="#8a8a8a">
        <path d="M4 .5h3.500v4H1M3 2.500l-2 2 2 2" />
    </svg>
);

const DocumentPage = () => (
    <article className="relative mx-auto h-full w-[794px] border-l border-t border-[#56657f] bg-white font-['Noto_Sans_CJK_SC',sans-serif] text-base text-black shadow-[4px_0_4px_rgba(40,60,100,0.5)]">
        <div className="flex justify-between px-24 pt-[72px]">
            <span className="h-6 w-6 border-b border-r border-[#a8a8a8]" />
            <span className="h-6 w-6 border-b border-l border-[#a8a8a8]" />
        </div>
        <h2 className="mt-1.5 pl-2 text-center text-[22px] leading-7">
            （<span className={clsx('text-[18px] leading-none', MONO)}>B56Q</span>）顾客特殊要求<Ret />
        </h2>
        <div className="relative mt-2 pl-[112px]">
            <table className="w-[569px] table-fixed border-collapse text-center text-[15px] font-bold leading-[20px]">
                <colgroup>
                    <col className="w-[99px]" /><col className="w-[158px]" /><col className="w-[172px]" /><col className="w-[140px]" />
                </colgroup>
                <thead>
                    <tr className="h-[21px] bg-[#92d050]">
                        <th className="whitespace-nowrap border border-black p-0 text-[14px]">更新项目序号<Ret /></th>
                        <th className="border border-black p-0">更新项目名称<Ret /></th>
                        <th className="border border-black p-0">更新时间<Ret /></th>
                        <th className="border border-black p-0">客户协议编号<Ret /></th>
                    </tr>
                </thead>
                <tbody>
                    <tr className="h-[22px]">
                        <td className="border border-black p-0"><Ret /></td>
                        <td className="border border-black p-0"><Ret /></td>
                        <td className="border border-black p-0 font-['Liberation_Sans',sans-serif] text-[13px]">20181124<Ret /></td>
                        <td className="border border-black p-0">标记<Ret /></td>
                    </tr>
                    <tr className="h-[21px]">
                        <td className="border border-black p-0"><Ret /></td>
                        <td className="border border-black p-0"><Ret /></td>
                        <td className="border border-black p-0"><Ret /></td>
                        <td className="border border-black p-0"><Ret /></td>
                    </tr>
                </tbody>
            </table>
            <div className="absolute left-[681px] top-0 flex h-full flex-col justify-around"><Ret /><Ret /><Ret /></div>
        </div>
        <p className="pl-2 text-center text-[14px] leading-5 text-[#00009c]">备注：更新的内容以蓝色字体显示<span className="ml-3"><Ret /></span></p>
        <div className="whitespace-nowrap pl-[120px] pt-[9px] leading-6">
            <p>
                <Song text="1.顾客要求在印制板上加产品的图号（即客户型号，如:DD7.820.166，如客户" /><br />
                <Song text="型号是其它格式的，请提出确认）" /><Ret />
            </p>
            <p className="mt-1.5">
                <Song text="2.顾客要求在印制板上加生产周期和序列号，序列号从 001 开始。序列号不允" /><br />
                <Song text="许断号。NOPE 单由销售提出更改。" /><Ret />
            </p>
            <p className="mt-1 text-[#1274b0]">
                <Song text="3.标记：" />
                <span className="text-[14px] leading-none text-[#00009c]">制板说明中无要求时，</span>
                <Song text="不加 FP 标记" /><Ret />
            </p>
            <p className="mt-0.5"><Ret /></p>
        </div>
        {/* screen annotations */}
        <div className="absolute left-[97px] right-[86px] top-[214px] h-[74px] border-[5px] border-[#ffff00] shadow-[2px_3px_4px_rgba(0,0,0,0.55),inset_2px_3px_5px_rgba(0,0,0,0.45)]" />
        <svg viewBox="0 0 80 90" className="absolute left-[38px] top-[156px] h-[90px] w-20">
            <path d="M4 4l53 62" stroke="#ff0000" strokeWidth="4.500" strokeLinecap="round" />
            <path d="M78 86L50 71l9-6 7-10z" fill="#ff0000" stroke="#ff0000" />
        </svg>
    </article>
);

const Scrollbar = () => (
    <div className="flex w-[14px] shrink-0 flex-col items-center bg-[#a5c2ec] text-[#2b3f66]">
        <span className="mt-1 h-0.5 w-2.5 bg-[#27384f]" />
        <svg viewBox="0 0 12 12" className="my-1 size-3" fill="#fff" stroke="#555"><path d="M1 1l4 1 2-1 4 1v6l-2 1v2l-3-2H1zM5 4v3M7 4v3" /></svg>
        <button aria-label="向上滚动" className="flex h-[17px] w-full items-center justify-center bg-[#6d92c8]"><Down className="h-[5px] w-2 rotate-180" /></button>
        <div className="flex w-full flex-1 flex-col bg-[#7e9fd0]">
            <div className="flex h-[408px] w-full flex-col items-center justify-center gap-0.5 rounded-[2px] border border-[#4a6a9c] bg-linear-to-r from-[#f2f7fd] to-[#a9c0de]">
                <span className="h-px w-1.5 bg-[#7a8fb0]" /><span className="h-px w-1.5 bg-[#7a8fb0]" /><span className="h-px w-1.5 bg-[#7a8fb0]" />
            </div>
        </div>
        <button aria-label="向下滚动" className="flex h-[17px] w-full items-center justify-center bg-[#7e9fd0]"><Down className="h-[5px] w-2" /></button>
        <button aria-label="前一页" className="mt-1 flex h-3 flex-col items-center text-black"><Down className="rotate-180" /><Down className="rotate-180" /></button>
        <button aria-label="选择浏览对象" className="my-[3px] size-2 rounded-full border border-black bg-[#cfd8e8]" />
        <button aria-label="下一页" className="my-1 flex h-3 flex-col items-center text-black"><Down /><Down /></button>
    </div>
);

const StatusBar = () => (
    <footer className="flex h-7 shrink-0 items-stretch justify-between border-t border-[#5f80b0] bg-linear-to-b from-[#dceafc] via-[#bcd6fa] to-[#cfe2fc] text-[15px] leading-[26px] text-[#15306b]">
        <div className="flex divide-x divide-[#9bbbe3]">
            <span className="w-[79px] pl-[9px]">页面: 1/1</span>
            <span className="w-[85px] pl-[11px]">字数: 160</span>
            <span className="flex w-[170px] items-center gap-4 pl-2.5">
                <svg viewBox="0 0 20 18" className="h-[18px] w-5">
                    <path d="M1 8l8-4 9 5-8 7z" fill="#fff" stroke="#33508c" />
                    <path d="M1 8v3l9 7 8-6V9l-8 7z" fill="#4a74c4" stroke="#33508c" strokeWidth=".6" />
                    <path d="M11 0h3v7l-3 4-1-2z" fill="#d0743a" stroke="#7a3a14" strokeWidth=".6" />
                    <path d="M6 9l3 3" stroke="#222" />
                </svg>
                中文(简体，中国)
            </span>
            <span className="w-[49px] pl-2.5">插入</span>
            <span />
        </div>
        <div className="flex items-center border-l border-[#5f80b0] bg-linear-to-b from-[#aecbf2] via-[#83a9dc] to-[#93b7e6] pl-1">
            <div className="flex h-6 rounded-[2px] border border-[#8fa9cf] bg-[#b9d1f0]">
                <Tool w="w-6" label="页面视图" on>
                    <svg viewBox="0 0 14 14" className="size-3.5" fill="#fff" stroke="#5a4a20"><path d="M.5.500h13v13H.5zM3 3.500h8M3 5.500h8M3 7.500h8M3 9.500h8M3 11.500h8" /></svg>
                </Tool>
                <Tool w="w-6" label="阅读版式">
                    <svg viewBox="0 0 14 12" className="h-3 w-3.5" fill="#fff" stroke="#444"><path d="M.5 1l3-.5L7 1.500l3.500-1 3 .5v9l-3-.5L7 11 3.500 9.500l-3 .5zM7 1.500V11M2.500 3v5M5 3v5M9 3v5M11.500 3v5" /></svg>
                </Tool>
                <Tool w="w-6" label="Web 版式">
                    <svg viewBox="0 0 14 14" className="size-3.5" fill="#fff" stroke="#444"><path d="M.5.500h9v11h-9zM2 3h6M2 5h6M2 7h4" /><circle cx="10" cy="10" r="3.500" fill="#2f8f6a" stroke="#2a56a0" /></svg>
                </Tool>
                <Tool w="w-6" label="大纲视图">
                    <svg viewBox="0 0 13 12" className="h-3 w-[13px]" stroke="#666"><path d="M1 .5h8M5 3h7M5 5.500h7M1 8h5M5 10.500h7" /></svg>
                </Tool>
                <Tool w="w-[21px]" label="草稿">
                    <svg viewBox="0 0 13 12" className="h-3 w-[13px]" stroke="#555"><path d="M0 1h13M0 4h13M0 7.500h13M0 10.500h13" /></svg>
                </Tool>
            </div>
            <span className="w-[58px] text-center">100%</span>
            <button aria-label="缩小" className="flex size-5 items-center justify-center rounded-full border-2 border-[#5a6e94] bg-[#e6edf8]"><span className="h-0.5 w-2.5 bg-[#3a4a6c]" /></button>
            <input
                type="range" aria-label="显示比例" defaultValue={49}
                className="h-5 w-32 appearance-none bg-[linear-gradient(#44659c,#44659c)] bg-[length:100%_1px] bg-center bg-no-repeat [&::-webkit-slider-thumb]:h-4 [&::-webkit-slider-thumb]:w-2.5 [&::-webkit-slider-thumb]:appearance-none [&::-webkit-slider-thumb]:rounded-b-[5px] [&::-webkit-slider-thumb]:border [&::-webkit-slider-thumb]:border-[#3f5f94] [&::-webkit-slider-thumb]:bg-[#dce8f8]"
            />
            <button aria-label="放大" className="relative flex size-5 items-center justify-center rounded-full border-2 border-[#5a6e94] bg-[#e6edf8]">
                <span className="h-0.5 w-2.5 bg-[#3a4a6c]" /><span className="absolute h-2.5 w-0.5 bg-[#3a4a6c]" />
            </button>
            <svg viewBox="0 0 11 11" className="ml-3 mt-2 size-[11px]" fill="#3f5f94"><path d="M8 0h3v3H8zM8 4h3v3H8zM4 4h3v3H4zM8 8h3v3H8zM4 8h3v3H4zM0 8h3v3H0z" /></svg>
        </div>
    </footer>
);

const WordWindow = () => (
    <div className="absolute bottom-[9px] left-[1010px] right-[73px] top-[42px] flex flex-col bg-[#bfdbff] shadow-[0_3px_16px_rgba(0,0,0,0.5)]">
        <OfficeOrb />
        <header className="relative flex h-[34px] shrink-0 items-center justify-between bg-white">
            <div className="flex shrink-0 items-center pl-[54px]">
                <div className={clsx(QAT, 'w-[159px]')}>
                    <SaveIcon />
                    <span className="ml-2.5 flex items-center gap-2"><UndoIcon color="#aab2c4" /><Down className="text-[#aab2c2]" /></span>
                    <span className="ml-[11px] flex items-center gap-[9px]"><RepeatIcon /><FolderIcon /><MailIcon /></span>
                </div>
                <span className="ml-2"><CustomizeIcon /></span>
            </div>
            <h1 className="ml-auto mr-[152px] whitespace-nowrap text-base leading-6 text-black">20180118192405816-71 [兼容模式] - Microsoft Word</h1>
            <Caption color="#000" className="h-[30px]" />
        </header>
        <div className="relative h-[29px] shrink-0">
            <Tabs items={['开始', '插入', '页面布局', '引用', '邮件', '审阅', '视图', 'Acrobat']} />
            <div className="absolute right-1.5 top-1.5"><HelpIcon /></div>
        </div>
        <WordRibbon />
        <main className="mx-0.5 flex min-h-0 flex-1 bg-linear-to-b from-[#a5c4ec] via-[#4f79b6] via-60% to-[#6691d0]">
            <div className="relative min-w-0 flex-1 overflow-hidden pr-0.5 pt-[23px]">
                <svg viewBox="0 0 400 160" className="absolute left-0 top-0 h-40 w-[400px]" fill="#fff">
                    <path d="M0 0h370C220 20 80 70 0 150z" opacity=".18" />
                    <path d="M0 0h230C130 15 50 40 0 80z" opacity=".12" />
                </svg>
                <DocumentPage />
            </div>
            <Scrollbar />
        </main>
        <StatusBar />
    </div>
);

export default function App() {
    return (
        <div className={clsx('relative h-screen w-full overflow-hidden bg-[#00a2f2]', UI)}>
            <GenesisWindow />
            <ExcelWindow />
            <WordWindow />
        </div>
    );
}
